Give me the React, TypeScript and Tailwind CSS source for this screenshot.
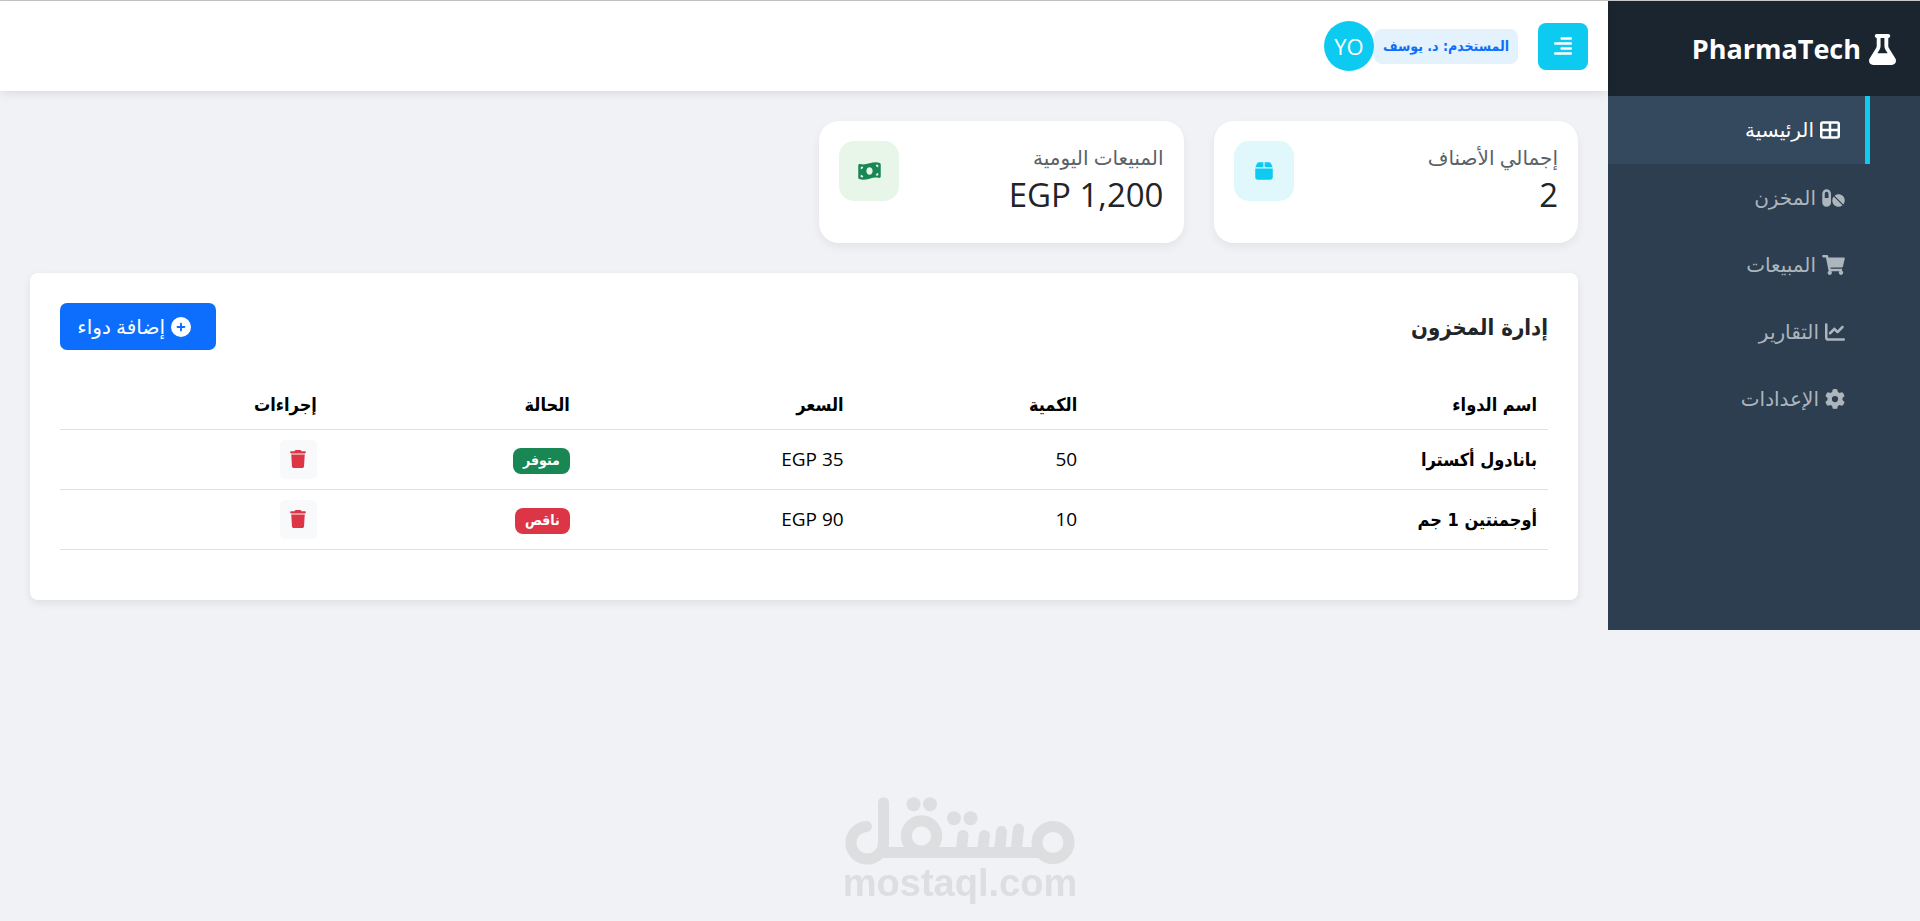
import type { ReactNode } from 'react';
import { FaPills, FaShoppingCart } from 'react-icons/fa';
import {
  FaAlignRight,
  FaBox,
  FaChartLine,
  FaCirclePlus,
  FaFlask,
  FaGear,
  FaMoneyBillWave,
  FaTableCellsLarge,
  FaTrash,
} from 'react-icons/fa6';

const navItems: { label: string; icon: ReactNode; active?: boolean }[] = [
  { label: 'الرئيسية', icon: <FaTableCellsLarge className="h-5 w-5" />, active: true },
  { label: 'المخزن', icon: <FaPills className="h-5 w-[23px]" /> },
  { label: 'المبيعات', icon: <FaShoppingCart className="h-5 w-[23px]" /> },
  { label: 'التقارير', icon: <FaChartLine className="h-5 w-5" /> },
  { label: 'الإعدادات', icon: <FaGear className="h-5 w-5" /> },
];

const medicines = [
  { name: 'بانادول أكسترا', quantity: 50, price: 35, low: false },
  { name: 'أوجمنتين 1 جم', quantity: 10, price: 90, low: true },
];

function Sidebar() {
  return (
    <aside className="w-[312px] shrink-0 bg-[#2c3e50]">
      <div className="flex h-[95px] items-center gap-2 bg-[#1a252f] px-6 pt-0.5 text-[27px] font-bold text-white">
        <FaFlask className="h-[31px] w-[27px]" />
        <span>PharmaTech</span>
      </div>
      <nav>
        <ul className="pr-[50px]">
          {navItems.map((item) => (
            <li key={item.label}>
              <a
                href="#"
                className={
                  item.active
                    ? 'flex h-[68px] items-center gap-[6px] border-r-[5px] border-[#0dcaf0] bg-[#34495e] px-[25px] text-[20px] text-white'
                    : 'flex h-[67px] items-center gap-[6px] px-[25px] text-[20px] text-[#adb5bd]'
                }
              >
                {item.icon}
                <span>{item.label}</span>
              </a>
            </li>
          ))}
        </ul>
      </nav>
    </aside>
  );
}

function TopBar() {
  return (
    <header className="flex h-[90px] items-center bg-white px-5 shadow-[0_2px_10px_rgba(0,0,0,0.1)]">
      <button
        type="button"
        aria-label="القائمة"
        className="flex h-[47px] w-[50px] items-center justify-center rounded-[8px] bg-[#0dcaf0] text-white"
      >
        <FaAlignRight className="h-5 w-[18px]" preserveAspectRatio="none" />
      </button>
      <span className="mr-5 flex h-[35px] items-center rounded-[8px] bg-[#e3f2fd] px-[9px] font-['DejaVu_Sans_Condensed','DejaVu_Sans',sans-serif] text-[14px] font-bold text-[#0d6efd]">
        المستخدم: د. يوسف
      </span>
      <span className="flex size-[50px] items-center justify-center rounded-full bg-[#0dcaf0] text-[22px] text-white">
        YO
      </span>
    </header>
  );
}

function StatCard(props: { title: string; value: string; children: ReactNode; tone: string }) {
  return (
    <section className="flex h-[122px] items-start justify-between rounded-[20px] bg-white p-5 shadow-[0_4px_10px_rgba(0,0,0,0.06)]">
      <div>
        <h2 className="text-[20px] leading-[34px] text-[#5a6268]">{props.title}</h2>
        <p dir="ltr" className="text-right text-[33px] leading-[40px] text-[#212529]">
          {props.value}
        </p>
      </div>
      <span className={props.tone}>{props.children}</span>
    </section>
  );
}

function Inventory() {
  return (
    <section className="mt-[30px] rounded-[8px] bg-white p-[30px] pb-[50px] shadow-[0_3px_8px_rgba(0,0,0,0.08)]">
      <div className="flex items-start justify-between">
        <h1 className="font-['DejaVu_Sans_Condensed','DejaVu_Sans',sans-serif] text-[22px] leading-[50px] font-bold text-[#212529]">
          إدارة المخزون
        </h1>
        <button
          type="button"
          className="flex h-[47px] w-[156px] items-center gap-[6px] rounded-[7px] bg-[#0d6efd] pr-[25px] text-[20px] text-white"
        >
          <FaCirclePlus />
          <span>إضافة دواء</span>
        </button>
      </div>
      <table className="mt-[28px] w-full table-fixed text-right text-black">
        <colgroup>
          <col className="w-[30.9%]" />
          <col className="w-[15.7%]" />
          <col className="w-[18.4%]" />
          <col className="w-[17%]" />
          <col className="w-[18%]" />
        </colgroup>
        <thead>
          <tr className="h-[48px] border-b border-[#dee2e6]">
            {['اسم الدواء', 'الكمية', 'السعر', 'الحالة', 'إجراءات'].map((title) => (
              <th
                key={title}
                scope="col"
                className="px-[11px] font-['DejaVu_Sans_Condensed','DejaVu_Sans',sans-serif] text-[18px] font-bold"
              >
                {title}
              </th>
            ))}
          </tr>
        </thead>
        <tbody>
          {medicines.map((item) => (
            <tr key={item.name} className="h-[60px] border-b border-[#dee2e6]">
              <th
                scope="row"
                className="px-[11px] font-['DejaVu_Sans_Condensed','DejaVu_Sans',sans-serif] text-[18px] font-bold"
              >
                {item.name}
              </th>
              <td className="px-[11px]">{item.quantity}</td>
              <td className="px-[11px]">
                <span dir="ltr">EGP {item.price}</span>
              </td>
              <td className="px-[11px]">
                <span
                  className={
                    item.low
                      ? "inline-flex h-[26px] items-center rounded-[8px] bg-[#dc3545] px-[10px] font-['DejaVu_Sans_Condensed','DejaVu_Sans',sans-serif] text-[14px] font-bold text-white"
                      : "inline-flex h-[26px] items-center rounded-[8px] bg-[#198754] px-[10px] font-['DejaVu_Sans_Condensed','DejaVu_Sans',sans-serif] text-[14px] font-bold text-white"
                  }
                >
                  {item.low ? 'ناقص' : 'متوفر'}
                </span>
              </td>
              <td className="px-[11px]">
                <button
                  type="button"
                  aria-label={'حذف ' + item.name}
                  className="flex h-[39px] w-[37px] items-center justify-center rounded-[5px] bg-[#f8f9fa] text-[#dc3545]"
                >
                  <FaTrash className="h-[18px] w-4" />
                </button>
              </td>
            </tr>
          ))}
        </tbody>
      </table>
    </section>
  );
}

function Watermark() {
  return (
    <div
      dir="ltr"
      className="pointer-events-none fixed inset-x-0 bottom-[20px] flex flex-col items-center text-[#dddee0]"
    >
      <svg viewBox="0 0 230 68" className="h-[68px] w-[230px]" fill="none" stroke="currentColor" strokeWidth="11" strokeLinecap="round" aria-hidden="true">
        <path d="M21.500 29.500A16.300 16.300 0 1 0 38.500 46V5.700" />
        <path d="M33 55.500H199" strokeLinecap="butt" />
        <circle cx="76.500" cy="39" r="15.200" />
        <circle cx="208" cy="45.500" r="16" />
        <path d="M116 55L118 38.500M137.500 55L139.500 38.500M154.500 55L156.500 34.500M171 55L173.500 32" />
        <g fill="currentColor" stroke="none">
          <circle cx="68.500" cy="7.300" r="7" />
          <circle cx="85" cy="7.300" r="7" />
          <circle cx="109" cy="21.300" r="7" />
          <circle cx="125.500" cy="21.300" r="7" />
        </g>
      </svg>
      <span className="font-['Liberation_Sans',sans-serif] text-[38px] leading-[36px] font-bold">mostaql.com</span>
    </div>
  );
}

export default function App() {
  return (
    <div
      dir="rtl"
      className="min-h-screen border-t border-[#c8c8c8] bg-[#f0f2f5] font-['Open_Sans','Noto_Sans','DejaVu_Sans',sans-serif] text-[19px]"
    >
      <div className="flex">
        <Sidebar />
        <div className="min-w-0 grow">
          <TopBar />
          <main className="p-[30px]">
            <div className="grid grid-cols-4 gap-[30px]">
              <StatCard
                title="إجمالي الأصناف"
                value="2"
                tone="flex size-[60px] items-center justify-center rounded-[15px] bg-[#e0f7fc] text-[#0dcaf0]"
              >
                <FaBox className="h-5 w-[18px]" />
              </StatCard>
              <StatCard
                title="المبيعات اليومية"
                value="EGP 1,200"
                tone="flex size-[60px] items-center justify-center rounded-[15px] bg-[#e8f5e9] text-[#198754]"
              >
                <FaMoneyBillWave className="h-5 w-[23px]" />
              </StatCard>
            </div>
            <Inventory />
          </main>
        </div>
      </div>
      <Watermark />
    </div>
  );
}
